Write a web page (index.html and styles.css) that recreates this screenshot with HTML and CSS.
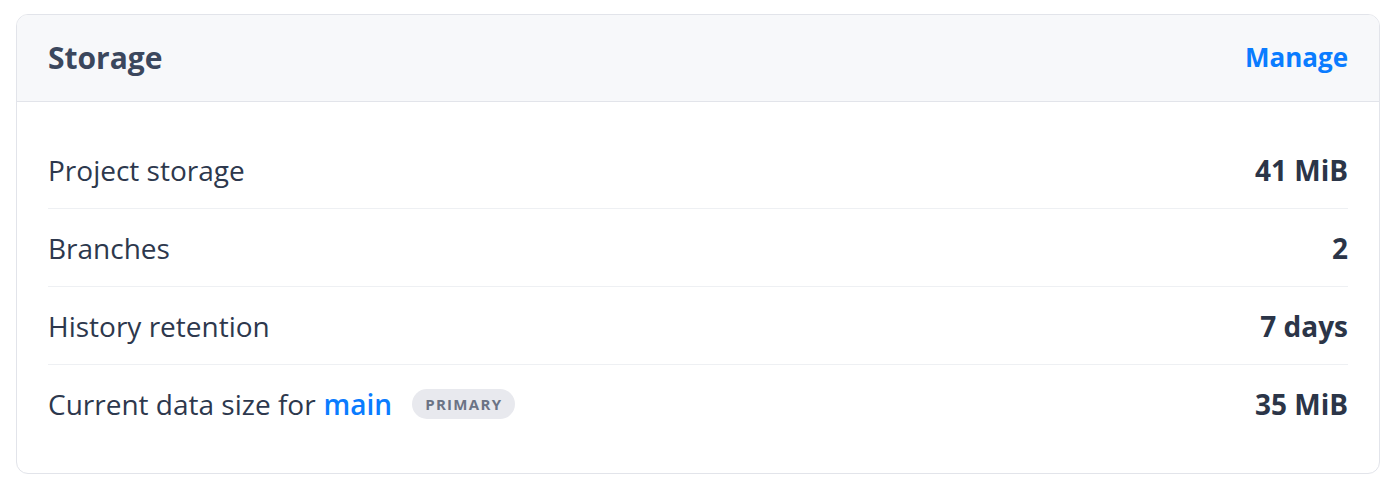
FILE: index.html
```html
<!DOCTYPE html>
<html lang="en">
<head>
    <meta charset="UTF-8">
    <meta name="viewport" content="width=device-width, initial-scale=1.0">
    <title>Storage</title>
    <link rel="stylesheet" href="styles.css">
</head>
<body>

<div class="card">
    <div class="card-header">
        <h2>Storage</h2>
        <a href="#" class="link">Manage</a>
    </div>

    <div class="card-body">
        <div class="row">
            <span class="label">Project storage</span>
            <span class="value">41 MiB</span>
        </div>
        <div class="row">
            <span class="label">Branches</span>
            <span class="value">2</span>
        </div>
        <div class="row">
            <span class="label">History retention</span>
            <span class="value">7 days</span>
        </div>
        <div class="row">
            <span class="label">Current data size for <a href="#" class="branch">main</a> <span class="badge">Primary</span></span>
            <span class="value">35 MiB</span>
        </div>
    </div>
</div>

</body>
</html>
```

FILE: styles.css
```css
body {
    font-family: "Open Sans", Arial, sans-serif;
    background-color: #ffffff;
    margin: 0;
    padding: 14px 17px 9px 16px;
}
.card {
    border: 1px solid #e2e4ea;
    border-radius: 12px;
    overflow: hidden;
}
.card-header {
    display: flex;
    justify-content: space-between;
    align-items: center;
    height: 84px;
    padding: 0 31px 2px;
    background-color: #f7f8fa;
    border-bottom: 1px solid #e2e4ea;
}
.card-header h2 {
    margin: 0;
    font-size: 30px;
    font-weight: 700;
    color: #3b475d;
}
.link {
    font-size: 26px;
    font-weight: 700;
    color: #0a7cff;
    text-decoration: none;
}
.card-body {
    padding: 29px 31px 31px;
}
.row {
    display: flex;
    justify-content: space-between;
    align-items: center;
    height: 77px;
    border-bottom: 1px solid #eef0f3;
}
.row:last-child {
    border-bottom: none;
}
.label {
    font-size: 28px;
    color: #2d384d;
    display: flex;
    align-items: center;
}
.branch {
    color: #0a7cff;
    text-decoration: none;
    font-weight: 600;
    margin-left: 8px;
}
.badge {
    display: inline-block;
    margin-left: 20px;
    padding: 0 13px;
    height: 30px;
    line-height: 30px;
    border-radius: 15px;
    background-color: #e8e9ee;
    color: #6b7385;
    font-size: 15px;
    font-weight: 700;
    letter-spacing: 1.3px;
    text-transform: uppercase;
}
.value {
    font-size: 28px;
    font-weight: 700;
    color: #2b3548;
}
```
